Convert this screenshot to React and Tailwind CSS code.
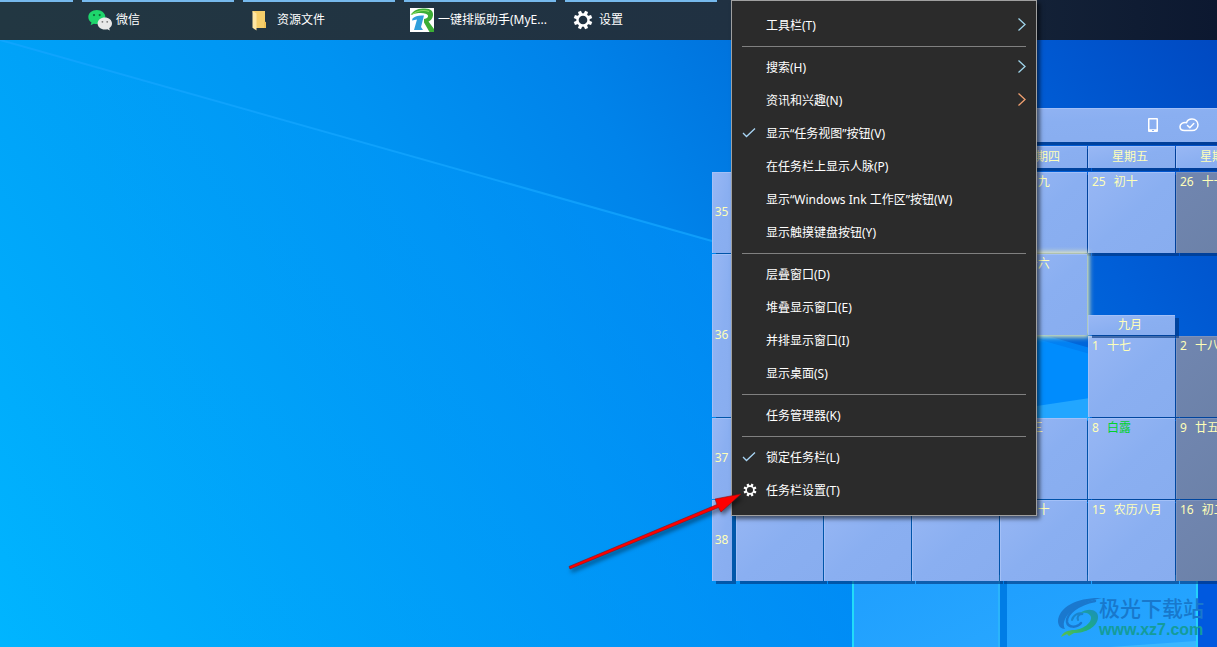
import React from "react";

const FONT = "font-['Noto_Sans','Noto_Sans_CJK_SC',sans-serif]";

function Wallpaper() {
  return (
    <svg
      aria-hidden="true"
      className="absolute inset-0 h-full w-full"
      viewBox="0 0 1217 647"
      preserveAspectRatio="xMinYMin slice"
    >
      <defs>
        <linearGradient id="sky" gradientUnits="userSpaceOnUse" x1="0" y1="647" x2="1184" y2="-134">
          <stop offset="0" stopColor="#00b5ff" />
          <stop offset="0.24" stopColor="#00a2f8" />
          <stop offset="0.42" stopColor="#0093f2" />
          <stop offset="0.56" stopColor="#0083ea" />
          <stop offset="0.66" stopColor="#0074de" />
          <stop offset="0.8" stopColor="#005fd8" />
          <stop offset="1" stopColor="#0042ba" />
        </linearGradient>
        <linearGradient id="ray" gradientUnits="userSpaceOnUse" x1="0" y1="0" x2="1100" y2="0">
          <stop offset="0" stopColor="#00a8ff" stopOpacity="0" />
          <stop offset="0.65" stopColor="#0092fc" stopOpacity="0.45" />
          <stop offset="1" stopColor="#008cff" stopOpacity="0.7" />
        </linearGradient>
        <linearGradient id="pane" x1="0" y1="0" x2="1" y2="1">
          <stop offset="0" stopColor="#1f9ffe" />
          <stop offset="1" stopColor="#27a6ff" />
        </linearGradient>
      </defs>
      <rect width="1217" height="647" fill="url(#sky)" />
      <path d="M0 40 L712 241 L1090 348 L1090 647 L0 647Z" fill="url(#ray)" />
      <path d="M0 40 L712 241" stroke="#14a6ff" strokeWidth="2" opacity="0.75" />
      <path d="M1030 337 L1090 354 V420 H1030Z" fill="#008cfd" />
      <path d="M1030 407 L1090 398 V420 H1030Z" fill="#22a6ff" />
      <rect x="853" y="575" width="146" height="72" fill="url(#pane)" />
      <rect x="852" y="575" width="2" height="72" fill="#22dcf8" />
      <rect x="998" y="575" width="2" height="72" fill="#2bb4fb" />
      <rect x="1000" y="575" width="7" height="72" fill="#007de6" />
      <rect x="1007" y="575" width="189" height="72" fill="url(#pane)" />
      <path d="M1110 647 L1196 641 V647Z" fill="#3ab6ff" />
      <rect x="1196" y="575" width="2" height="72" fill="#25d0fa" />
      <rect x="1198" y="575" width="19" height="72" fill="#0059df" />
    </svg>
  );
}

function Gear({ className }) {
  const teeth = [0, 45, 90, 135, 180, 225, 270, 315];
  return (
    <svg viewBox="0 0 24 24" className={className} aria-hidden="true">
      <circle cx="12" cy="12" r="6.6" fill="none" stroke="currentColor" strokeWidth="2.8" />
      {teeth.map((a) => (
        <path key={a} d="M10.100 0.800 h3.800 l0.300 4.200 h-4.400z" fill="currentColor" transform={`rotate(${a + 22.5} 12 12)`} />
      ))}
    </svg>
  );
}

function WeChat() {
  return (
    <svg viewBox="0 0 24 24" className="size-6" aria-hidden="true">
      <path d="M8.800 2C4.100 2 0.300 5.100 0.300 9.100c0 2.300 1.200 4.200 3.200 5.500l-.9 2.700 3.200-1.600c1 .3 2 .4 3 .4 4.800 0 8.600-3.100 8.600-7S13.600 2 8.800 2Z" fill="#1ed66c" />
      <circle cx="6" cy="7.100" r="1.100" fill="#0b6b35" />
      <circle cx="11.700" cy="7.100" r="1.100" fill="#0b6b35" />
      <path d="M16.800 9.500c-4 0-7.200 2.600-7.200 6s3.200 6 7.200 6c.9 0 1.700-.1 2.500-.3l2.600 1.400-.7-2.300c1.700-1.100 2.800-2.800 2.800-4.800 0-3.400-3.200-6-7.200-6Z" fill="#e8e8e8" />
      <circle cx="14.400" cy="13.800" r="0.900" fill="#777" />
      <circle cx="19.200" cy="13.800" r="0.900" fill="#777" />
    </svg>
  );
}

function Folder() {
  return (
    <svg viewBox="0 0 24 24" className="size-6" aria-hidden="true">
      <path d="M3.500 3H16v10.500l1 1V20H7z" fill="#f6cf6a" />
      <path d="M3.500 3l4 2.500v17l-4-2.800z" fill="#ffe7a3" />
      <path d="M15 13.500l2 1V20h-2z" fill="#f0c257" />
    </svg>
  );
}

function Typeset() {
  return (
    <svg viewBox="0 0 24 24" className="size-6" aria-hidden="true">
      <rect width="24" height="24" fill="#fff" />
      <path d="M0.500 7C4 1.500 9 0.500 15 0.500C21 0.500 23.500 3.500 23 7.500C22.500 11 20.500 12.500 18.500 13.500L24 21V24H19.500L14 14.500V11C17 10.500 18.500 9 18 7.500C17 4.500 8 4 0.500 7Z" fill="#3cae36" />
      <path d="M2 6.500C7 2.500 14 1.500 19 3.500" fill="none" stroke="#8fdc63" strokeWidth="1.200" />
      <path d="M2.500 10.500C5 8 9 7 14 7.500L11 19L13 22H4L7 11.500L2 12.500Z" fill="#2f9fdb" />
    </svg>
  );
}

const TASKS = [
  { label: "微信", icon: <WeChat /> },
  { label: "资源文件", icon: <Folder /> },
  { label: "一键排版助手(MyE...", icon: <Typeset /> },
  { label: "设置", icon: <Gear className="size-5" /> },
];

function Taskbar() {
  return (
    <header className="relative flex h-10 gap-[9px] overflow-hidden bg-linear-to-r from-[#223742] via-[#203142] via-60% to-[#0c1830] text-white">
      <div className="w-[73px] shrink-0 border-t-2 border-[#76b9ed]" />
      {TASKS.map((t) => (
        <button key={t.label} type="button" className="flex w-[152px] shrink-0 items-center gap-1 border-t-2 border-[#76b9ed] pr-1 pb-0.5 pl-1.5 text-xs whitespace-nowrap">
          <span className="flex size-6 shrink-0 items-center justify-center">{t.icon}</span>
          {t.label}
        </button>
      ))}
    </header>
  );
}

const MENU = [
  [{ label: "工具栏(T)", sub: true }],
  [
    { label: "搜索(H)", sub: true },
    { label: "资讯和兴趣(N)", sub: true, warm: true },
    { label: "显示“任务视图”按钮(V)", checked: true },
    { label: "在任务栏上显示人脉(P)" },
    { label: "显示“Windows Ink 工作区”按钮(W)" },
    { label: "显示触摸键盘按钮(Y)" },
  ],
  [{ label: "层叠窗口(D)" }, { label: "堆叠显示窗口(E)" }, { label: "并排显示窗口(I)" }, { label: "显示桌面(S)" }],
  [{ label: "任务管理器(K)" }],
  [{ label: "锁定任务栏(L)", checked: true }, { label: "任务栏设置(T)", gear: true }],
];

function Chevron({ warm }) {
  return (
    <svg viewBox="0 0 8 14" className={warm ? "mb-0.5 h-3.5 w-2 text-[#f0a070]" : "mb-0.5 h-3.5 w-2 text-[#9fd4ea]"} aria-hidden="true">
      <path d="M0.500 0.500l6.500 6-6.500 6" fill="none" stroke="currentColor" strokeWidth="1.300" />
    </svg>
  );
}

function ContextMenu() {
  return (
    <nav className="absolute top-0 left-[731px] w-[306px] border border-[#a0a0a0] bg-[#2b2b2b] px-2.5 py-2 text-xs text-white shadow-[3px_3px_4px_rgba(0,0,0,0.55)]">
      {MENU.map((group, i) => (
        <div key={i} className={i ? "mt-1 border-t border-[#808080] pt-1" : ""}>
          {group.map((m) => (
            <button key={m.label} type="button" className="flex h-[33px] w-full items-center text-left whitespace-nowrap">
              <span className="flex w-6 shrink-0 items-center pb-0.5">
                {m.checked && (
                  <svg viewBox="0 0 14 10" className="h-2.5 w-3.5 text-[#a8d4f4]" aria-hidden="true">
                    <path d="M1 5l3.500 3.500L13 0.500" fill="none" stroke="currentColor" strokeWidth="1.300" />
                  </svg>
                )}
                {m.gear && <Gear className="ml-px size-3.5" />}
              </span>
              <span className="grow">{m.label}</span>
              {m.sub && <Chevron warm={m.warm} />}
            </button>
          ))}
        </div>
      ))}
    </nav>
  );
}

const CELL = "bg-linear-to-br from-[#98b7f4] via-[#8aaff1] to-[#88adef] border-t border-l border-[#a3c0f7]";
const WEEKEND = "bg-linear-to-br from-[#7186b0] to-[#6a80a6] border-t border-l border-[#7d92bb]";
const SHADE = "shadow-[4px_3px_0_rgba(0,50,120,0.6)]";

const ROWS = [
  [null, null, null, ["24", "初九"], ["25", "初十"], ["26", "十一"]],
  [null, null, null, ["31", "十六"], "gap", "gap"],
  [null, null, null, "gap", ["1", "十七"], ["2", "十八"]],
  [null, null, null, ["7", "廿三"], ["8", "白露"], ["9", "廿五"]],
  [null, null, null, ["14", "三十"], ["15", "农历八月"], ["16", "初二"]],
];

function Day({ day, weekend, selected }) {
  if (day === "gap") return <div />;
  const look = weekend ? WEEKEND : CELL;
  const glow = selected ? "relative shadow-[0_0_5px_2px_#f3f1b4]" : SHADE;
  return (
    <div className={`flex gap-2 overflow-hidden px-[3px] pt-px text-xs leading-4 whitespace-nowrap text-[#ffffb8] ${look} ${glow}`}>
      {day && (
        <>
          <span>{day[0]}</span>
          <span className={day[1] === "白露" ? "text-[#00d22c]" : ""}>{day[1]}</span>
        </>
      )}
    </div>
  );
}

function Calendar() {
  return (
    <section className="absolute top-[108px] left-[712px] grid grid-cols-[20px_527px] gap-x-1 text-xs text-[#ffffb8]">
      <div className={`col-start-2 flex h-[34px] items-center justify-end gap-5 pr-16 pb-px text-white ${CELL} ${SHADE}`}>
        <svg viewBox="0 0 12 16" className="h-4 w-3" aria-hidden="true">
          <path fillRule="evenodd" d="M2 1h8a1 1 0 0 1 1 1v12a1 1 0 0 1-1 1H2a1 1 0 0 1-1-1V2a1 1 0 0 1 1-1ZM2.500 2.500v9.700h7V2.500ZM5 13v1h2v-1Z" fill="currentColor" />
        </svg>
        <svg viewBox="0 0 20 16" className="h-4 w-5" fill="none" stroke="currentColor" strokeWidth="1.500" strokeLinecap="round" strokeLinejoin="round" aria-hidden="true">
          <path d="M5.500 13.500h7.500c3.500 0 6-2.500 6-5.700S16.500 2 13 2C10 2 8.200 3.600 7.500 5.700C4 5 1 7 1 9.700c0 2.300 2 3.800 4.500 3.800Z" />
          <path d="M8.500 8.500l2.300 2.200 4-4.200" />
        </svg>
      </div>
      <div className="col-start-2 mt-1 mb-1 grid h-[22px] grid-cols-[repeat(6,87px)] gap-px">
        {["", "", "", "星期四", "星期五", "星期六"].map((d, i) => (
          <div key={i} className={`flex items-center justify-center pr-1 pb-0.5 ${CELL} ${SHADE}`}>{d}</div>
        ))}
      </div>
      <div className="grid grid-rows-[81px_163px_81px_81px] gap-px">
        {[35, 36, 37, 38].map((w) => (
          <div key={w} className={`flex items-center justify-center pr-0.5 pb-0.5 ${CELL} ${SHADE}`}>{w}</div>
        ))}
      </div>
      <div className="relative grid grid-cols-[repeat(6,87px)] grid-rows-[repeat(5,81px)] gap-px">
        {ROWS.map((row, r) =>
          row.map((day, c) => <Day key={`${r}-${c}`} day={day} weekend={c === 5} selected={r === 1 && c === 3} />)
        )}
        <div className={`absolute top-[143px] left-[352px] flex h-5 w-[87px] items-center justify-center pr-1 pb-0.5 ${CELL} ${SHADE}`}>九月</div>
      </div>
    </section>
  );
}

function Arrow() {
  return (
    <svg viewBox="0 0 180 84" className="absolute top-[488px] left-[566px] h-[84px] w-[180px] drop-shadow-[2px_3px_2px_rgba(0,0,0,0.5)]" aria-hidden="true">
      <path d="M3 78.500L151 16.500L149 11L175 6L155 24L152.500 19.500L4 81Z" fill="#f00" stroke="#8a1010" strokeWidth="0.600" />
    </svg>
  );
}

function Watermark() {
  return (
    <div className="absolute top-[596px] left-[1057px] flex items-start whitespace-nowrap">
      <svg viewBox="0 0 46 44" className="h-11 w-[46px]" fill="none" strokeLinecap="round" aria-hidden="true">
        <defs>
          <linearGradient id="swirl" x1="0" y1="1" x2="1" y2="0">
            <stop offset="0" stopColor="#5fc04a" />
            <stop offset="0.5" stopColor="#1fae7c" />
            <stop offset="1" stopColor="#1a8ec0" />
          </linearGradient>
        </defs>
        <path d="M45 2C22 1 2 10 1 25c0 5 3 8 7 8C3 24 14 8 45 2Z" fill="#1a78ce" />
        <path d="M38 5C21 8 9 18 10 26c1 6 10 6 14 1" stroke="#1a78ce" strokeWidth="2.500" />
        <path d="M15 24c1-5 7-8 11-6-5 0-6 3-5 6" stroke="#1a84cc" strokeWidth="2" />
        <path d="M23 17C32 11 42 14 41 22C40 31 29 37 17 37L12 40L10 38L4 41C6 36 10 35 15 34C27 34 35 26 34 21C33 17 28 16 23 17Z" fill="url(#swirl)" />
      </svg>
      <div className="-ml-1">
        <div className="text-[21px] leading-6 font-medium text-[#1878cc]">极光下载站</div>
        <div className="font-['Liberation_Sans',sans-serif] text-base leading-5 font-bold text-[#149c9a]">www.xz7.com</div>
      </div>
    </div>
  );
}

export default function App() {
  return (
    <main lang="zh-CN" className={`relative min-h-screen overflow-hidden bg-[#0090f5] ${FONT}`}>
      <Wallpaper />
      <Taskbar />
      <Calendar />
      <ContextMenu />
      <Arrow />
      <Watermark />
    </main>
  );
}
